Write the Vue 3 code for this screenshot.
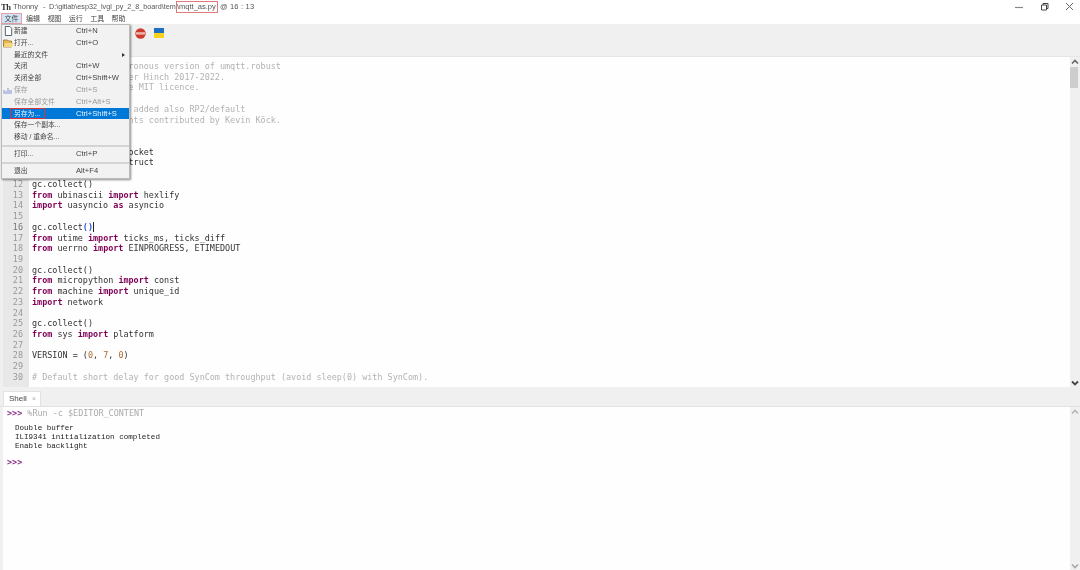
<script setup>
const K = (t) => ({ t, c: 'kw' })
const lines = [
  [{ t: '# mqtt_as.py Asynchronous version of umqtt.robust', c: 'cm' }],
  [{ t: '# (C) Copyright Peter Hinch 2017-2022.', c: 'cm' }],
  [{ t: '# Released under the MIT licence.', c: 'cm' }],
  [],
  [{ t: '# Pyboard D support added also RP2/default', c: 'cm' }],
  [{ t: '# Various improvements contributed by Kevin Köck.', c: 'cm' }],
  [],
  [K('import'), { t: ' gc' }],
  [K('import'), { t: ' usocket ' }, K('as'), { t: ' socket' }],
  [K('import'), { t: ' ustruct ' }, K('as'), { t: ' struct' }],
  [],
  [{ t: 'gc.collect()' }],
  [K('from'), { t: ' ubinascii ' }, K('import'), { t: ' hexlify' }],
  [K('import'), { t: ' uasyncio ' }, K('as'), { t: ' asyncio' }],
  [],
  [{ t: 'gc.collect' }, { t: '()', c: 'br' }, { t: '', c: 'caret' }],
  [K('from'), { t: ' utime ' }, K('import'), { t: ' ticks_ms, ticks_diff' }],
  [K('from'), { t: ' uerrno ' }, K('import'), { t: ' EINPROGRESS, ETIMEDOUT' }],
  [],
  [{ t: 'gc.collect()' }],
  [K('from'), { t: ' micropython ' }, K('import'), { t: ' const' }],
  [K('from'), { t: ' machine ' }, K('import'), { t: ' unique_id' }],
  [K('import'), { t: ' network' }],
  [],
  [{ t: 'gc.collect()' }],
  [K('from'), { t: ' sys ' }, K('import'), { t: ' platform' }],
  [],
  [{ t: 'VERSION = (' }, { t: '0', c: 'num' }, { t: ', ' }, { t: '7', c: 'num' }, { t: ', ' }, { t: '0', c: 'num' }, { t: ')' }],
  [],
  [{ t: '# Default short delay for good SynCom throughput (avoid sleep(0) with SynCom).', c: 'cm' }],
]
const menus = ['文件', '编辑', '视图', '运行', '工具', '帮助']
const items = [
  { label: '新建', key: 'Ctrl+N', icon: 'new' },
  { label: '打开...', key: 'Ctrl+O', icon: 'open' },
  { label: '最近的文件', key: '', sub: true },
  { label: '关闭', key: 'Ctrl+W' },
  { label: '关闭全部', key: 'Ctrl+Shift+W' },
  { label: '保存', key: 'Ctrl+S', off: true, icon: 'save' },
  { label: '保存全部文件', key: 'Ctrl+Alt+S', off: true },
  { label: '另存为...', key: 'Ctrl+Shift+S', on: true },
  { label: '保存一个副本...', key: '' },
  { label: '移动 / 重命名...', key: '' },
  { sep: true },
  { label: '打印...', key: 'Ctrl+P' },
  { sep: true },
  { label: '退出', key: 'Alt+F4' },
]
</script>

<template>
  <div class="win">
    <header class="title">
      <span class="logo">Th</span>
      <span class="tt">Thonny</span><span class="dash">-</span>
      <span class="path">D:\gitlab\esp32_lvgl_py_2_8_board\tem</span>
      <span class="redfile">\mqtt_as.py</span>
      <span class="at">@</span>
      <span class="pos">16 : 13</span>
      <span class="ctrls">
        <svg width="10" height="10" viewBox="0 0 10 10"><path d="M0 5.5h8" stroke="#888" stroke-width="1.2"/></svg>
        <svg width="10" height="10" viewBox="0 0 10 10"><path d="M1.5 3h5v5h-5zM3 3V1.5h5v5H6.5" fill="none" stroke="#444" stroke-width="1"/></svg>
        <svg width="10" height="10" viewBox="0 0 10 10"><path d="M1 1l7 7M8 1l-7 7" stroke="#666" stroke-width="1"/></svg>
      </span>
    </header>
    <nav class="menubar">
      <span v-for="(m, i) in menus" :key="m" class="mi" :class="{ act: i === 0 }">{{ m }}</span>
    </nav>
    <div class="toolbar">
      <svg class="stop" width="11" height="11" viewBox="0 0 11 11">
        <circle cx="5.5" cy="5.5" r="5.2" fill="#cf3a30"/>
        <rect x="1" y="4.2" width="9" height="2.4" fill="#eeb8b0"/>
      </svg>
      <svg class="flag" width="10" height="10" viewBox="0 0 10 10">
        <rect width="10" height="5" fill="#1f6fc0"/>
        <rect y="5" width="10" height="5" fill="#f8d21c"/>
      </svg>
    </div>

    <section class="editor">
      <div class="gutter">
        <div v-for="(l, i) in lines" :key="i" class="ln" :class="{ cur: i === 15 }">{{ i + 1 }}</div>
      </div>
      <div class="code">
        <div v-for="(l, i) in lines" :key="i" class="cl"><span v-for="(s, j) in l" :key="j" :class="s.c">{{ s.t }}</span></div>
      </div>
      <div class="sb">
        <svg class="arr" width="8" height="6" viewBox="0 0 8 6"><path d="M1 4.5L4 1.5l3 3" fill="none" stroke="#666" stroke-width="1.6"/></svg>
        <div class="thumb"></div>
        <svg class="arr down" width="8" height="6" viewBox="0 0 8 6"><path d="M1 1.5L4 4.5l3-3" fill="none" stroke="#444" stroke-width="1.8"/></svg>
      </div>
    </section>

    <div class="tabs"><span class="tab">Shell <i>×</i></span></div>

    <section class="shell">
      <div class="shbody">
        <div class="cmd"><span class="pr">&gt;&gt;&gt;</span> <span class="run">%Run -c $EDITOR_CONTENT</span></div>
        <pre class="out">Double buffer
ILI9341 initialization completed
Enable backlight</pre>
        <div class="pr last">&gt;&gt;&gt;</div>
      </div>
      <div class="sb">
        <svg class="arr" width="8" height="6" viewBox="0 0 8 6"><path d="M1 4.5L4 1.5l3 3" fill="none" stroke="#b5b5b5" stroke-width="1.6"/></svg>
        <svg class="arr down" width="8" height="6" viewBox="0 0 8 6"><path d="M1 1.5L4 4.5l3-3" fill="none" stroke="#a8a8a8" stroke-width="1.6"/></svg>
      </div>
    </section>

    <div class="menu">
      <template v-for="(it, i) in items" :key="i">
        <div v-if="it.sep" class="sep"></div>
        <div v-else class="row" :class="{ off: it.off, on: it.on }">
          <span class="ic">
            <svg v-if="it.icon === 'new'" width="9" height="10" viewBox="0 0 10 11"><path d="M1.5.5h5l2 2v8h-7z" fill="#fff" stroke="#456"/></svg>
            <svg v-if="it.icon === 'open'" width="11" height="10" viewBox="0 0 11 10"><path d="M.5 2h4l1 1h3v6h-8z" fill="#e8b850" stroke="#8a6a20" stroke-width=".7"/><path d="M2 5h8.5L9 9H.8z" fill="#f6d77c"/></svg>
            <svg v-if="it.icon === 'save'" width="10" height="10" viewBox="0 0 10 10"><path d="M1 5v4M3 6v3M5 3v6" stroke="#8f9fd0" stroke-width="1.1"/><path d="M6 5h3v4H6z" fill="#b8c4e4"/></svg>
          </span>
          <span class="lb">{{ it.label }}</span>
          <span class="ky">{{ it.key }}</span>
          <span v-if="it.sub" class="tri"></span>
          <span v-if="it.on" class="mark"></span>
        </div>
      </template>
    </div>
  </div>
</template>

<style>
html, body { margin: 0; padding: 0; background: #fff; overflow: hidden; }
</style>

<style scoped>
.win {
  width: 1080px; height: 570px; position: relative; overflow: hidden;
  background: #fff; color: #333;
  font-family: "Liberation Sans", "Noto Sans CJK SC", sans-serif; font-size: 7.5px;
  display: flex; flex-direction: column;
  filter: blur(0.35px);
}
.title { height: 13px; display: flex; align-items: center; padding-left: 1px; color: #555; flex: none; white-space: nowrap; }
.logo { width: 12px; font: bold 8.5px "Liberation Serif", serif; color: #333; letter-spacing: -.5px; }
.tt { width: 30px; }
.dash { width: 6px; }
.path { width: 127px; font-size: 7.2px; }
.redfile { box-sizing: border-box; width: 42px; height: 12px; line-height: 10px; border: 1px solid #e07a7a; }
.at { margin-left: 2px; width: 10px; }
.pos { letter-spacing: .2px; }
.ctrls { margin-left: auto; display: flex; gap: 15px; padding-right: 5px; }
.menubar { height: 11px; display: flex; padding-left: 1px; flex: none; font-size: 7px; }
.mi { width: 21.4px; padding-left: 3.6px; box-sizing: border-box; line-height: 11px; color: #444; }
.mi.act { background: #cfe5f7; box-shadow: inset 0 0 0 1px #e9a0a8; }
.toolbar { height: 33px; background: #f0f0f0; flex: none; display: flex; align-items: flex-start; padding: 4px 0 0 135px; gap: 8px; box-sizing: border-box; border-bottom: 1px solid #e6e6e6; }
.editor { height: 330px; display: flex; flex: none; overflow: hidden; padding-left: 3px; background: #fefefe; box-shadow: inset 3px 0 0 #f0f0f0; }
.gutter { width: 26px; background: #e8e8e8; flex: none; font: 8.45px/10.72px "DejaVu Sans Mono", monospace; color: #999; text-align: right; padding-top: 4px; box-sizing: border-box; }
.ln { padding-right: 6px; }
.ln.cur { color: #777; }
.code { flex: 1; font: 8.45px/10.72px "DejaVu Sans Mono", monospace; color: #333; padding: 4px 0 0 3px; white-space: pre; overflow: hidden; }
.cl { height: 10.72px; }
.kw { color: #7f0055; font-weight: bold; }
.cm { color: #b3b3b3; }
.num { color: #b36a2e; }
.br { color: #2a52d8; font-weight: bold; }
.caret { display: inline-block; width: 1px; height: 10px; background: #222; vertical-align: -2px; }
.sb { width: 10px; flex: none; background: #f0f0f0; display: flex; flex-direction: column; align-items: center; }
.arr { margin-top: 2px; flex: none; }
.arr.down { margin-top: auto; margin-bottom: 1px; }
.thumb { width: 8px; height: 21px; margin-top: 2px; margin-right: 2px; background: #cdcdcd; }
.tabs { height: 20px; flex: none; background: #f0f0f0; display: flex; align-items: flex-end; padding-left: 3px; box-sizing: border-box; border-bottom: 1px solid #e2e2e2; }
.tab { height: 14px; line-height: 14px; background: #fff; padding: 0 4px 0 5px; font-size: 8px; color: #444; border: 1px solid #e2e2e2; border-bottom: 0; }
.tab i { font-style: normal; color: #aaa; font-size: 7px; margin-left: 3px; }
.shell { flex: 1; display: flex; padding-left: 3px; min-height: 0; background: #fefefe; box-shadow: inset 3px 0 0 #f0f0f0; }
.shbody { flex: 1; }
.cmd { height: 13px; font: 8.45px/13px "DejaVu Sans Mono", monospace; color: #aaa; margin-left: 4px; }
.pr { color: #8a2f8a; font-weight: bold; font-family: "DejaVu Sans Mono", monospace; font-size: 8.45px; }
.run { color: #aaa; }
.out { margin: 4px 0 0 12px; font: 7.55px/9.2px "Liberation Mono", monospace; color: #222; }
.last { margin: 4px 0 0 4px; line-height: 13px; }

.menu {
  position: absolute; left: 1px; top: 24px; width: 129px; height: 155px; box-sizing: border-box;
  background: #f2f2f2; border: 1px solid #bbb; box-shadow: 1px 1px 2px rgba(0,0,0,.45);
  display: flex; flex-direction: column; color: #444; font-size: 6.8px;
}
.row { height: 11.8px; line-height: 11.8px; display: flex; align-items: center; flex: none; position: relative; }
.ic { width: 12px; display: flex; justify-content: center; flex: none; }
.lb { width: 62px; flex: none; white-space: nowrap; }
.ky { white-space: nowrap; font-size: 7.6px; }
.off { color: #999; }
.on { background: #0078d7; color: #eaf4ff; }
.mark { position: absolute; left: 8px; top: 0; width: 35px; height: 11px; box-sizing: border-box; border: 1px solid #d8343c; }
.sep { height: 2px; background: #d4d4d4; margin: 1.6px 0; flex: none; }
.tri { position: absolute; right: 4px; top: 4px; border-left: 3px solid #333; border-top: 2px solid transparent; border-bottom: 2px solid transparent; }
</style>
